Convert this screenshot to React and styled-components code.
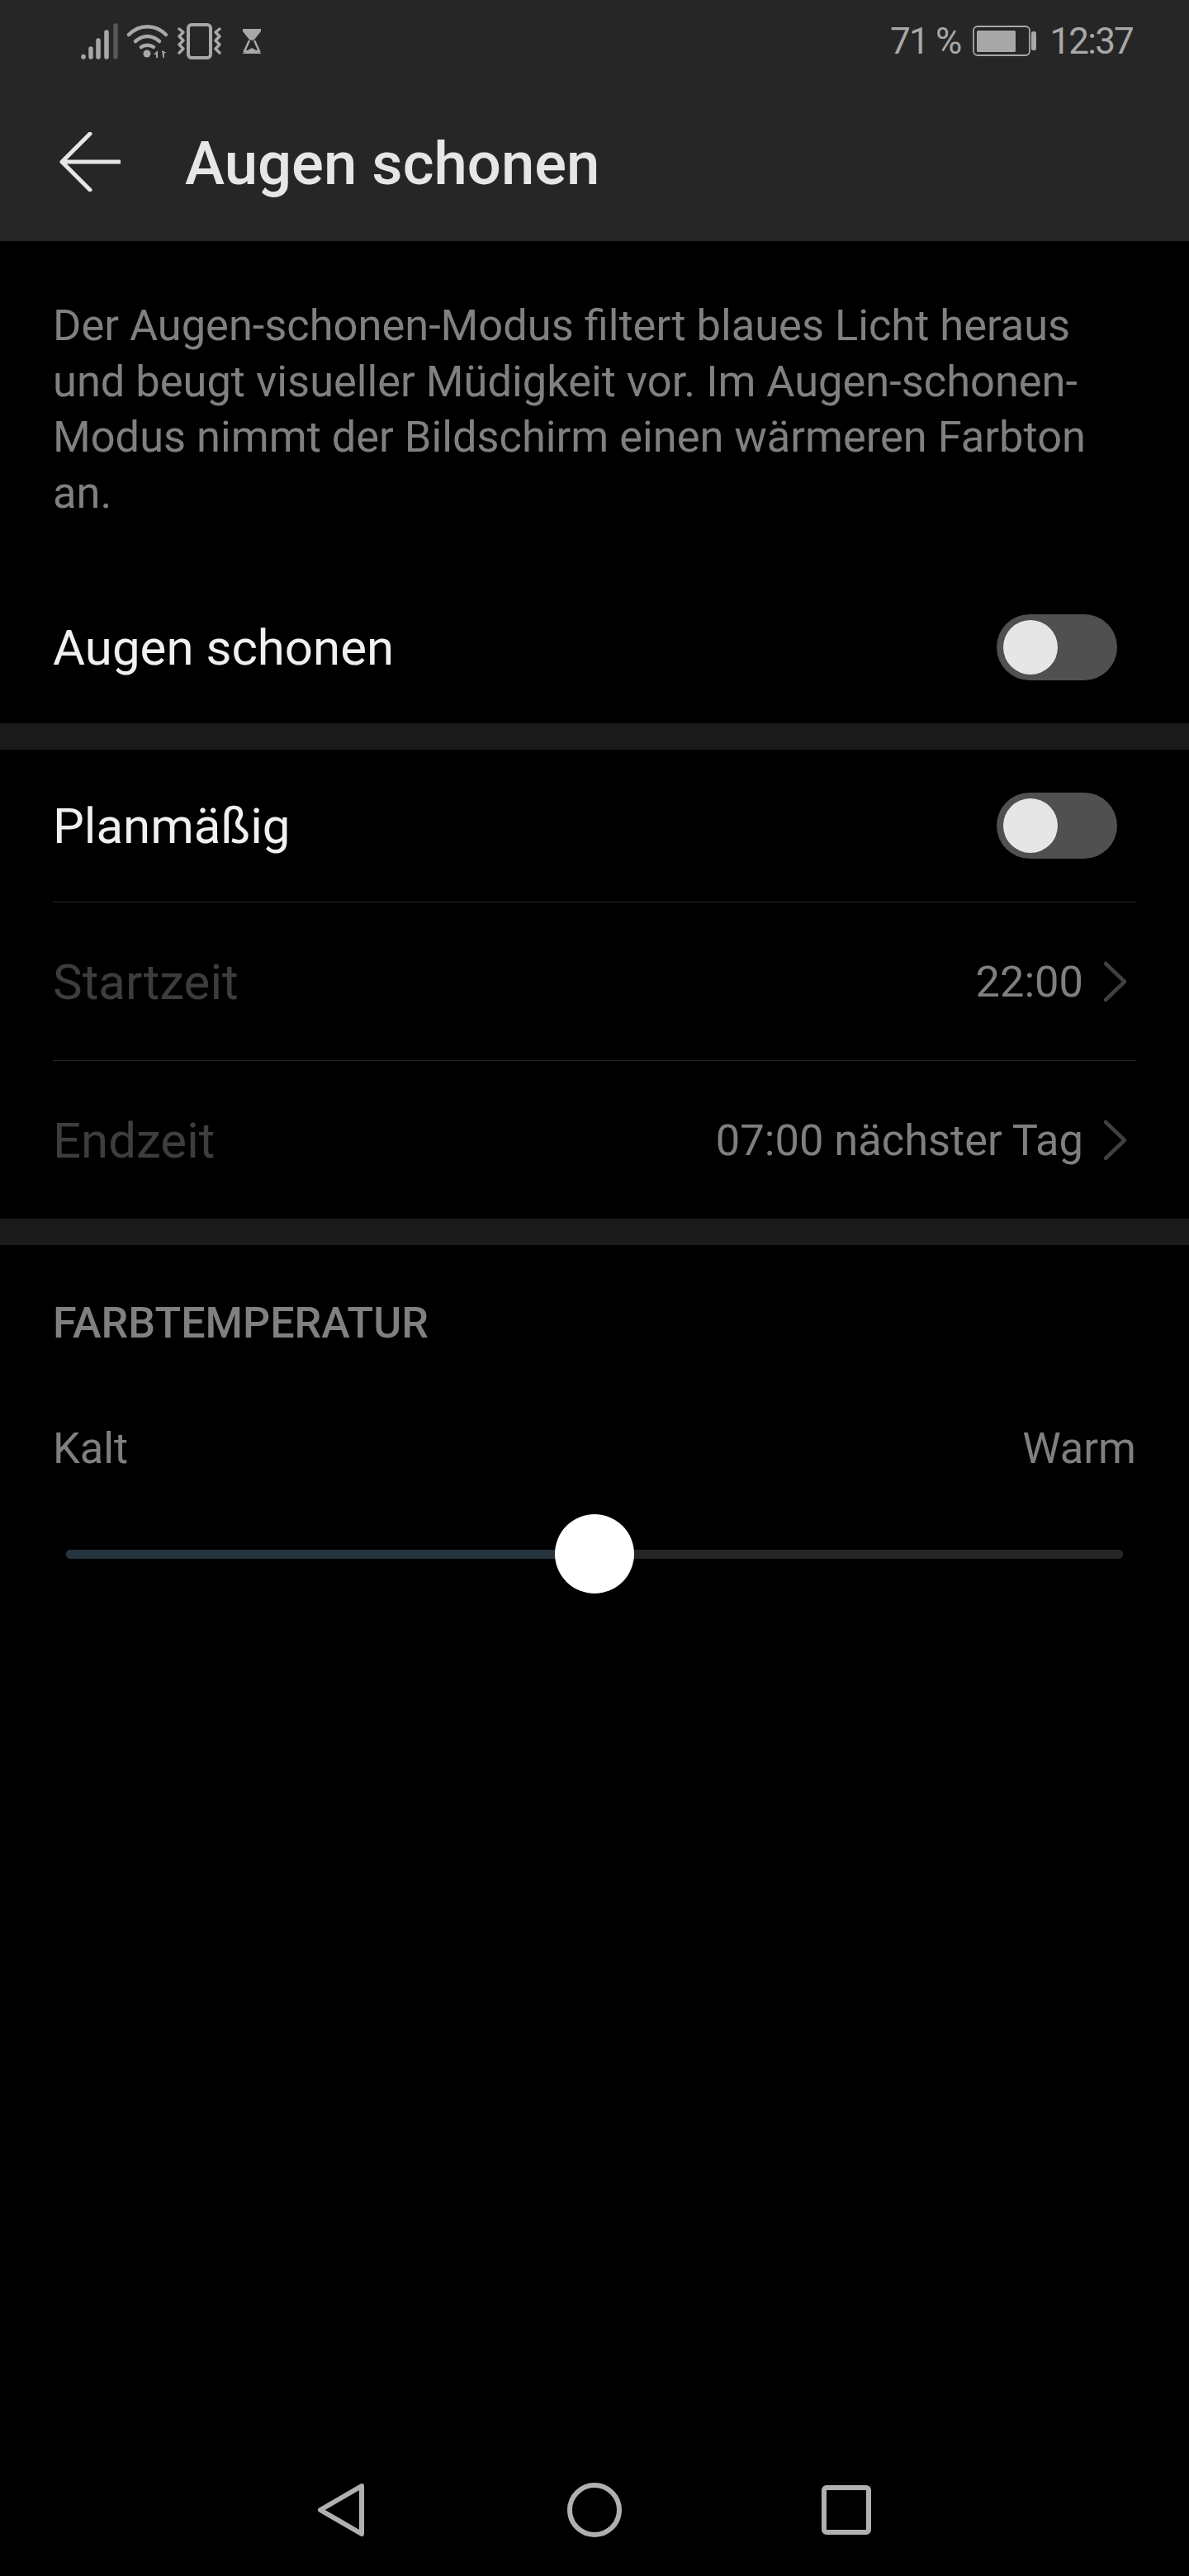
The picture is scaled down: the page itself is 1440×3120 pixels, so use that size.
import React from 'react'
import styled, { createGlobalStyle } from 'styled-components'

const GlobalStyle = createGlobalStyle`
    html, body {
        margin: 0;
        padding: 0;
        background: #000;
    }
    * {
        box-sizing: border-box;
    }
`

const Screen = styled.div`
    width: 1440px;
    height: 3120px;
    background: #000;
    display: flex;
    flex-direction: column;
    font-family: Roboto, "Liberation Sans", sans-serif;
    overflow: hidden;
`

const Header = styled.header`
    height: 292px;
    background: #262626;
    display: flex;
    flex-direction: column;
`

const StatusBar = styled.div`
    height: 100px;
    padding: 0 68px 0 98px;
    display: flex;
    align-items: center;
    justify-content: space-between;
    color: #a8a8a8;
`

const StatusGroup = styled.div`
    display: flex;
    align-items: center;
    gap: ${(p) => p.$gap}px;
`

const HourglassSlot = styled.div`
    display: flex;
    margin-left: 14px;
`

const StatusText = styled.span`
    font-size: 44px;
    line-height: 50px;
    letter-spacing: -1.8px;
`

const Toolbar = styled.div`
    flex: 1;
    display: flex;
    align-items: center;
    padding-left: 72px;
    gap: 78px;
`

const Title = styled.h1`
    margin: 0;
    padding-top: 6px;
    font-size: 72.5px;
    line-height: 84px;
    font-weight: 500;
    color: #e6e6e6;
`

const Description = styled.p`
    margin: 0;
    padding: 69px 64px 0;
    font-size: 52.4px;
    line-height: 67.5px;
    color: #808080;
`

const Row = styled.div`
    height: ${(p) => p.$height}px;
    margin: ${(p) => p.$top || 0}px 64px 0;
    display: flex;
    align-items: center;
    justify-content: space-between;
    border-top: ${(p) => (p.$line ? '1px solid #262626' : 'none')};
`

const RowLabel = styled.span`
    padding-top: 2px;
    font-size: 60px;
    line-height: 70px;
    color: ${(p) => (p.$disabled ? '#3d3d3d' : '#f0f0f0')};
`

const RowValue = styled.div`
    display: flex;
    align-items: center;
    gap: 24px;
    margin-right: 10px;
    font-size: 52.4px;
    line-height: 60px;
    color: #7f7f7f;
`

const Switch = styled.div`
    width: 146px;
    height: 80px;
    margin-right: 23px;
    border-radius: 40px;
    background: #505050;
    padding: 7px 8px;
`

const SwitchKnob = styled.div`
    width: 66px;
    height: 66px;
    border-radius: 50%;
    background: #e6e6e6;
`

const Divider = styled.div`
    height: 32px;
    flex-shrink: 0;
    background: #1a1a1a;
`

const SectionTitle = styled.h2`
    margin: 0;
    padding: 65px 64px 0;
    font-size: 52px;
    line-height: 60px;
    font-weight: 500;
    color: #808080;
`

const SliderLabels = styled.div`
    display: flex;
    justify-content: space-between;
    padding: 91px 64px 0;
    font-size: 52.4px;
    line-height: 60px;
    color: #7f7f7f;
`

const Slider = styled.div`
    height: 96px;
    margin: 50px 80px 0;
    display: flex;
    align-items: center;
    position: relative;
`

const Track = styled.div`
    flex: 1;
    height: 11px;
    border-radius: 6px;
    background: #262626;
    overflow: hidden;
`

const TrackFill = styled.div`
    height: 100%;
    background: #25343e;
`

const Thumb = styled.div`
    position: absolute;
    top: 0;
    left: calc(50% - 48px);
    width: 96px;
    height: 96px;
    border-radius: 50%;
    background: #fff;
`

const NavBar = styled.nav`
    margin-top: auto;
    height: 160px;
    display: flex;
    justify-content: center;
    gap: 241px;
    padding-top: 47px;
`

const SignalIcon = () => (
    <svg width="46" height="44" viewBox="0 0 46 44">
        <g strokeWidth="5.5" strokeLinecap="round" stroke="#a8a8a8">
            <path d="M3 40.5v.5" />
            <path d="M12 31v10" />
            <path d="M21 21v20" />
            <path d="M31 11v30" />
            <path d="M42 3v38" stroke="#575757" />
        </g>
    </svg>
)

const WifiIcon = () => (
    <svg width="52" height="44" viewBox="0 0 52 44" fill="none">
        <g stroke="#a8a8a8" strokeWidth="4.5" strokeLinecap="round">
            <path d="M3 14C16 1 35 1 48 14" />
            <path d="M11 22C20 14 31 14 40 22" />
            <path d="M18 29C22 26 29 26 33 29" />
        </g>
        <circle cx="25" cy="37" r="4.5" fill="#a8a8a8" />
        <path d="M38 33v9h-2v-4h-3zM43 33l6 3h-3v6h-1.5z" fill="#a8a8a8" />
    </svg>
)

const VibrateIcon = () => (
    <svg width="56" height="44" viewBox="0 0 56 44" fill="none">
        <rect x="14" y="2" width="27" height="40" rx="4" stroke="#a8a8a8" strokeWidth="4" />
        <path d="M3 7l5 4-5 5 5 5-5 5 5 5-5 5" stroke="#a8a8a8" strokeWidth="3.5" strokeLinejoin="round" strokeLinecap="round" />
        <path d="M52 7l-5 4 5 5-5 5 5 5-5 5 5 5" stroke="#a8a8a8" strokeWidth="3.5" strokeLinejoin="round" strokeLinecap="round" />
    </svg>
)

const HourglassIcon = () => (
    <svg width="24" height="30" viewBox="0 0 24 30" fill="none">
        <path d="M1 0h22v3l-8 10-3 1-3-1-8-10z" fill="#a8a8a8" />
        <path d="M9 14l-6 13h18l-6-13" stroke="#a8a8a8" strokeWidth="2.5" />
        <path d="M0 30l12-7 12 7z" fill="#a8a8a8" />
    </svg>
)

const BatteryIcon = () => (
    <svg width="78" height="38" viewBox="0 0 78 38" fill="none">
        <rect x="1" y="1" width="68" height="35" rx="5" stroke="#a8a8a8" strokeWidth="1.8" />
        <rect x="5" y="6" width="47" height="26" rx="1.5" fill="#a8a8a8" />
        <rect x="71" y="7" width="6" height="23" rx="2.5" fill="#a8a8a8" />
    </svg>
)

const BackIcon = () => (
    <svg width="74" height="72" viewBox="0 0 74 72" fill="none">
        <path d="M37 2L3 36l34 34M3 36h70" stroke="#e6e6e6" strokeWidth="5" strokeLinecap="round" strokeLinejoin="round" />
    </svg>
)

const ChevronIcon = () => (
    <svg width="30" height="50" viewBox="0 0 30 50" fill="none">
        <path d="M3 3l23 22L3 47" stroke="#404040" strokeWidth="4.5" strokeLinecap="round" strokeLinejoin="round" />
    </svg>
)

const NavBack = () => (
    <svg width="66" height="66" viewBox="0 0 66 66" fill="none">
        <path d="M58 4L8 33l50 29z" stroke="#b0b0b0" strokeWidth="6" strokeLinejoin="round" />
    </svg>
)

const NavHome = () => (
    <svg width="66" height="66" viewBox="0 0 66 66" fill="none">
        <circle cx="33" cy="33" r="30" stroke="#b0b0b0" strokeWidth="6" />
    </svg>
)

const NavRecent = () => (
    <svg width="66" height="66" viewBox="0 0 66 66" fill="none">
        <rect x="4" y="6" width="54" height="54" rx="3" stroke="#b0b0b0" strokeWidth="6" />
    </svg>
)

export default function App() {
    return (
        <Screen>
            <GlobalStyle />
            <Header>
                <StatusBar>
                    <StatusGroup $gap={9}>
                        <SignalIcon />
                        <WifiIcon />
                        <VibrateIcon />
                        <HourglassSlot>
                            <HourglassIcon />
                        </HourglassSlot>
                    </StatusGroup>
                    <StatusGroup $gap={15}>
                        <StatusText>71 %</StatusText>
                        <BatteryIcon />
                        <StatusText>12:37</StatusText>
                    </StatusGroup>
                </StatusBar>
                <Toolbar>
                    <BackIcon />
                    <Title>Augen schonen</Title>
                </Toolbar>
            </Header>
            <Description>
                Der Augen-schonen-Modus filtert blaues Licht heraus und beugt visueller Müdigkeit vor. Im Augen-schonen-Modus nimmt der Bildschirm einen wärmeren Farbton an.
            </Description>
            <Row $height={184} $top={61}>
                <RowLabel>Augen schonen</RowLabel>
                <Switch><SwitchKnob /></Switch>
            </Row>
            <Divider />
            <Row $height={184}>
                <RowLabel>Planmäßig</RowLabel>
                <Switch><SwitchKnob /></Switch>
            </Row>
            <Row $height={192} $line>
                <RowLabel $disabled>Startzeit</RowLabel>
                <RowValue>22:00<ChevronIcon /></RowValue>
            </Row>
            <Row $height={192} $line>
                <RowLabel $disabled>Endzeit</RowLabel>
                <RowValue>07:00 nächster Tag<ChevronIcon /></RowValue>
            </Row>
            <Divider />
            <SectionTitle>FARBTEMPERATUR</SectionTitle>
            <SliderLabels>
                <span>Kalt</span>
                <span>Warm</span>
            </SliderLabels>
            <Slider>
                <Track><TrackFill style={{ width: '50%' }} /></Track>
                <Thumb />
            </Slider>
            <NavBar>
                <NavBack />
                <NavHome />
                <NavRecent />
            </NavBar>
        </Screen>
    )
}
